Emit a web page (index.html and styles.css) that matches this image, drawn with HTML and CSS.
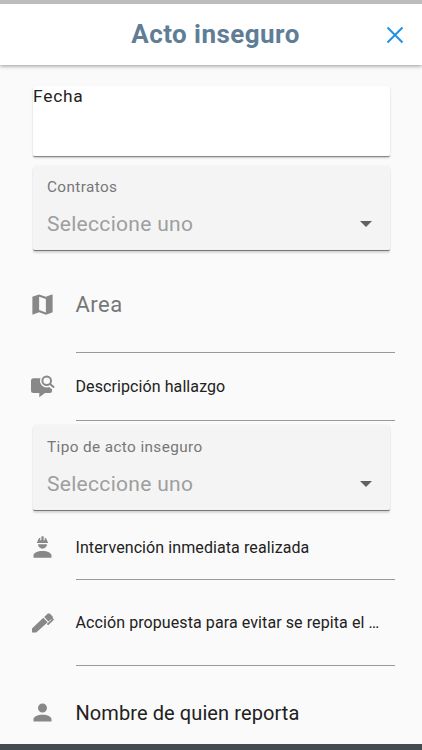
FILE: index.html
```html
<!DOCTYPE html>
<html lang="es"><head><meta charset="utf-8"><title>Acto inseguro</title><link rel="stylesheet" href="styles.css"></head>
<body>
<header class="bar"><h1>Acto inseguro</h1><svg class="close" viewBox="0 0 18 18"><path d="M1.500 1.500L16.500 16.500M16.500 1.500L1.500 16.500"/></svg></header>
<main>
<section class="card date">Fecha</section>
<section class="card select"><label>Contratos</label><div class="value">Seleccione uno<i></i></div></section>
<div class="row area"><svg class="icon" viewBox="0 0 24 24"><path d="M15 19l-6-2.110V5l6 2.110M20.500 3l-.16.03L15 5.100 9 3 3.360 4.900c-.21.07-.36.25-.36.48V20.500a.5.5 0 0 0 .5.5l.16-.03L9 18.900l6 2.100 5.640-1.900c.21-.07.36-.25.36-.48V3.500a.5.5 0 0 0-.5-.5"/></svg><span>Area</span></div>
<div class="row desc"><svg class="icon" viewBox="0 0 27 27"><path d="M4.500 5.300H18L23 14v3.500a2.300 2.300 0 0 1-2.300 2.500H16l-5.700 4.300V20H4.500A2.500 2.500 0 0 1 2 17.500V7.800a2.500 2.500 0 0 1 2.500-2.500z"/><path class="halo" d="M20.500 11l4 3.400"/><circle class="halo disc" cx="17.700" cy="7.800" r="4.300"/><path class="stroke" d="M20.500 10.600l4.600 4"/><circle class="stroke" cx="17.700" cy="7.800" r="4.300"/></svg><span>Descripción hallazgo</span></div>
<section class="card select second"><label>Tipo de acto inseguro</label><div class="value">Seleccione uno<i></i></div></section>
<div class="row action"><svg class="icon" viewBox="0 0 24 24"><path d="M12 15c-4.420 0-8 1.790-8 4v2h16v-2c0-2.210-3.580-4-8-4M8 9a4 4 0 0 0 8 0M11.500 2c-.3 0-.5.21-.5.5v3h-1V3S7.750 3.860 7.750 6.750c0 0-.75.14-.75 1.250h10c-.05-1.110-.75-1.250-.75-1.250C16.250 3.860 14 3 14 3v2.500h-1v-3c0-.29-.19-.5-.5-.5z"/></svg><span>Intervención inmediata realizada</span></div>
<div class="row proposal"><svg class="icon" viewBox="0 0 27 27"><path d="M3 23.500v-4L14.300 8.800l4.400 4.400L7.200 23.500zM15.200 8l3.600-3.600h2l2.900 3v1.500l-4.300 3.600z"/><path class="clip" d="M22.800 9.300l1 1.300-5.300 5"/></svg><span>Acción propuesta para evitar se repita el …</span></div>
<div class="row name"><svg class="icon" viewBox="0 0 24 24"><path d="M12 12c2.210 0 4-1.790 4-4s-1.790-4-4-4-4 1.790-4 4 1.790 4 4 4zm0 2c-4.420 0-8 1.790-8 4v2h16v-2c0-2.210-3.580-4-8-4z"/></svg><span>Nombre de quien reporta</span></div>
</main><footer></footer>
</body></html>
```
FILE: styles.css
```css
*{box-sizing:border-box}
body{margin:0;height:750px;overflow:hidden;background:#fafafa;font-family:Roboto,sans-serif;color:#212121;display:flex;flex-direction:column}
.bar{height:65px;flex:none;border-top:4px solid #bdbdbd;background:#fff;box-shadow:0 1px 4px #0006;display:grid;grid-template-columns:1fr auto 1fr;align-items:center;padding:0 18px 0 18px}
.bar h1{grid-column:2;margin:0;padding-left:9px;font-size:26px;line-height:61px;font-weight:700;letter-spacing:.45px;color:#607d96}
.close{width:18px;height:18px;justify-self:end;fill:none;stroke:#2191e5;stroke-width:2}
main{height:679px;flex:none;padding:21px 27px 0 29px;overflow:hidden}
.card{width:357px;border-radius:4px 4px 2px 2px;box-shadow:0 1px 2px #0003;margin-left:4px}
.date{height:71px;background:#fff;border-bottom:1px solid #888;font-size:17.400px;line-height:20px;letter-spacing:.75px}
.select{height:85px;margin-top:9px;background:#f4f4f4;border-bottom:1px solid #777;box-shadow:0 2px 2px #0002,0 0 2px #0001;padding:12px 18px 0 14px;color:#777}
.select label{display:block;font-size:15.300px;line-height:18px;letter-spacing:.4px}
.value{display:flex;align-items:center;justify-content:space-between;font-size:21px;line-height:30px;letter-spacing:.3px;margin-top:13px;color:#9e9e9e}
.value i{border:6px solid transparent;border-top-color:#616161;border-bottom:0}
.row{display:flex}
.icon{width:27px;height:27px;flex:none;fill:#888;margin:-2px 19.500px 0 0}
.row span{flex:1;border-bottom:1px solid #999;white-space:nowrap;font-size:16px;line-height:22px;letter-spacing:.09px;padding-top:1px}
.area{height:60px;margin-top:42px}.area span{font-size:22px;line-height:23px;letter-spacing:.5px;color:#777;padding-top:0}
.desc{height:46px;margin-top:22px}
.select.second{height:86px;margin-top:4px;padding-top:13px}
.action{height:44px;margin-top:25px}
.proposal{height:55px;margin-top:31px}
.name{height:50px;margin-top:35px}.name span{font-size:20px;line-height:23px}
.stroke{fill:none;stroke:#888;stroke-width:2}
.halo{fill:none;stroke:#fafafa;stroke-width:5}
.disc{fill:#fafafa}
.clip{fill:none;stroke:#888;stroke-width:1.800}
footer{height:6px;background:#424c50;flex:none}
```
